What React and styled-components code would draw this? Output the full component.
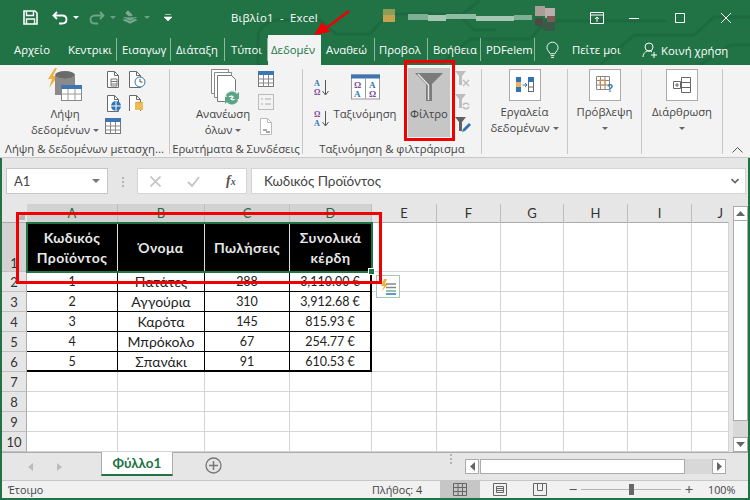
import React from "react";
import styled, { createGlobalStyle } from "styled-components";

const GREEN = "#217346";
const UI_FONT = `"Open Sans", "Noto Sans", sans-serif`;
const CELL_FONT = `Lato, "Noto Sans", sans-serif`;

const tabs = [
  { label: "Αρχείο", w: 64, pad: 14 },
  { label: "Κεντρικι", w: 53, pad: 4, sep: true },
  { label: "Εισαγωγ", w: 54, pad: 5, sep: true },
  { label: "Διάταξη", w: 54, pad: 5, sep: true },
  { label: "Τύποι", w: 43, pad: 6, sep: true },
  { label: "Δεδομέν", w: 53, pad: 3, active: true },
  { label: "Αναθεώ", w: 54, pad: 5, sep: true },
  { label: "Προβολ", w: 53, pad: 4, sep: true },
  { label: "Βοήθεια", w: 53, pad: 5, sep: true },
  { label: "PDFelem", w: 54, pad: 5, sep: true },
];

const columns = ["A", "B", "C", "D", "E", "F", "G", "H", "I", "J"];
const tableRows = [
  ["1", "Πατάτες", "288", "3,110.00 €"],
  ["2", "Αγγούρια", "310", "3,912.68 €"],
  ["3", "Καρότα", "145", "815.93 €"],
  ["4", "Μπρόκολο", "67", "254.77 €"],
  ["5", "Σπανάκι", "91", "610.53 €"],
];
const headers = [["Κωδικός", "Προϊόντος"], ["Όνομα"], ["Πωλήσεις"], ["Συνολικά", "κέρδη"]];

const Doc = ({ c = "#6a6a6a" }) => (
  <>
    <path d="M2.5 1.5h7l4 4v12h-11z" fill="#fff" stroke={c} />
    <path d="M9.5 1.5v4h4" fill="none" stroke={c} />
  </>
);

const TableSmall = ({ w = 16, h = 16, dim }) => (
  <svg width={w} height={h} viewBox="0 0 16 16">
    <rect x=".5" y=".5" width="15" height="15" fill="#fff" stroke={dim ? "#aaa" : "#777"} />
    <rect x="0" y="0" width="16" height="4" fill={dim ? "#9db8d4" : "#3f75b0"} />
    <path d="M.5 8h15M.5 12h15M5.5 4v12M10.5 4v12" stroke={dim ? "#bbb" : "#888"} />
  </svg>
);

const GetDataIcon = () => (
  <svg width="36" height="38" viewBox="0 0 36 38">
    <path d="M8 0 1 11h4l-3 9 9-12H6l4-8z" fill="#f0b03c" />
    <ellipse cx="18" cy="7" rx="10" ry="4" fill="#6b6b6b" />
    <path d="M8 7v20h20V7c-2 5-18 5-20 0z" fill="#8a8a8a" />
    <rect x="14.5" y="17.5" width="20" height="15" fill="#fff" stroke="#888" />
    <rect x="14" y="17" width="21" height="4" fill="#3f75b0" />
    <path d="M15 26h19M21 21v11M28 21v11" stroke="#999" />
  </svg>
);

const RefreshIcon = () => (
  <svg width="38" height="38" viewBox="-6 0 38 38">
    <path d="M1.5 1.5h17v24h-17z" fill="#fff" stroke="#888" />
    <path d="M4.5 4.5h17v25h-17z" fill="#fff" stroke="#888" />
    <path d="M7.5 7.5h14l4 4v22h-18z" fill="#fff" stroke="#777" />
    <circle cx="22" cy="30" r="8" fill="#f3f3f3" />
    <path d="M16 28c1-5 9-6 11-2l2-2v7h-7l2-2c-2-2-5-2-6 1zM28 32c-1 5-9 6-11 2l-2 2v-7h7l-2 2c2 2 5 2 6-1z" fill="#5aa585" />
  </svg>
);

const SortIcon = ({ reverse }) => (
  <svg width="16" height="18" viewBox="0 0 16 18">
    <text x="0" y="7" fontFamily="Liberation Serif" fontWeight="700" fontSize="8" fill={reverse ? "#7a4a9e" : "#2f75b5"}>
      {reverse ? "Ω" : "A"}
    </text>
    <text x="0" y="16" fontFamily="Liberation Serif" fontWeight="700" fontSize="8" fill={reverse ? "#2f75b5" : "#7a4a9e"}>
      {reverse ? "A" : "Ω"}
    </text>
    <path d="M11.5 1v14M8.500 12l3 4 3-4" fill="none" stroke="#555" />
  </svg>
);

const SortBigIcon = () => (
  <svg width="29" height="25" viewBox="0 0 29 25">
    <rect x=".5" y=".5" width="28" height="24" fill="#fff" stroke="#999" />
    <rect x="0" y="0" width="29" height="4" fill="#3f75b0" />
    <path d="M14.500 4v20" stroke="#999" />
    <g fontFamily="Liberation Serif" fontWeight="700" fontSize="9">
      <text x="3" y="13" fill="#7a4a9e">Ω</text>
      <text x="18" y="13" fill="#2f75b5">A</text>
      <text x="3" y="22" fill="#2f75b5">A</text>
      <text x="18" y="22" fill="#7a4a9e">Ω</text>
    </g>
  </svg>
);

const FunnelIcon = () => (
  <svg width="28" height="28" viewBox="0 0 28 28">
    <path d="M0 0h28L17 11v17h-6V11z" fill="#7b7b7b" />
    <path d="M3 1l10.500 11v15" fill="none" stroke="#e6e6e6" strokeWidth="1.4" />
  </svg>
);

const SmallFunnel = ({ fill = "#bdbdbd", children }) => (
  <svg width="16" height="16" viewBox="0 0 16 16">
    <path d="M0 0h11L7 5v9H4V5z" fill={fill} />
    {children}
  </svg>
);

const BoxedIcon = ({ kind }) => (
  <IconBox>
    <svg width="20" height="20" viewBox="0 0 20 20">
      {kind === "tools" && (
        <>
          <rect x="1" y="2" width="5" height="15" fill="#2f75b5" />
          <rect x="1" y="7" width="5" height="5" fill="#f0b060" />
          <rect x="13.500" y="2.500" width="5" height="14" fill="#fff" stroke="#666" />
          <rect x="13" y="2" width="6" height="5" fill="#2f75b5" />
          <path d="M13.500 12h5" stroke="#666" />
          <path d="M7.500 10h4M10 8l2 2-2 2" fill="none" stroke="#2f75b5" />
        </>
      )}
      {kind === "forecast" && (
        <>
          <path d="M1.500 1.500h13v13h-13zM1.500 5.500h13M1.500 10h13M5.500 1.500v13M10 1.500v13" fill="#fff" stroke="#888" />
          <rect x="5" y="5" width="5" height="5" fill="none" stroke="#e8903c" />
          <text x="12" y="17" fontFamily="Liberation Sans" fontWeight="700" fontSize="10" fill="#2f75b5">?</text>
        </>
      )}
      {kind === "outline" && (
        <>
          <path d="M9.500 2.500h9v15h-9zM9.500 7.500h9M9.500 12.500h9" fill="#fff" stroke="#666" />
          <path d="M1.500 6.500h7v7h-7zM3 10h4M5 8v4" fill="#fff" stroke="#666" />
        </>
      )}
    </svg>
  </IconBox>
);

const GridRow = ({ row }) => {
  const isHeader = row === 1;
  const isTableRow = row >= 2 && row <= 6;
  return (
    <>
      <RowHead $selected={isHeader}>{row}</RowHead>
      {columns.map((col, i) => {
        if (isHeader && i < 4) {
          return (
            <HeaderCell key={col}>
              {headers[i].map((line) => (
                <span key={line}>{line}</span>
              ))}
            </HeaderCell>
          );
        }
        if (isTableRow && i < 4) {
          return (
            <DataCell key={col} $lastRow={row === 6} $lastCol={i === 3} $isName={i === 1}>
              {tableRows[row - 2][i]}
            </DataCell>
          );
        }
        return <EmptyCell key={col} />;
      })}
    </>
  );
};

export default function App() {
  return (
    <>
      <GlobalStyle />
      <Window>
        <Chrome>
          <CircuitLines viewBox="0 0 750 65" preserveAspectRatio="none">
            <path
              d="M258 65V36c0-9 12-16 22-16h40l16 14h34l18-20h70l16 16 22 0M440 65l30-26h60l16-18h120M600 65l34-30h60l20-18h36M480 0l-20 16M700 65l30-20h20"
              fill="none"
              stroke="#1d6a40"
              strokeWidth="3"
            />
          </CircuitLines>
          <TitleBar>
            <Qat>
              <svg width="15" height="15" viewBox="0 0 15 15">
                <path d="M1 1h11l2 2v11H1z" fill="none" stroke="#fff" strokeWidth="1.6" />
                <path d="M3.500 1v4.500h7V1M3.500 14V9h8v5" fill="none" stroke="#fff" strokeWidth="1.4" />
              </svg>
              <QatGap $w={14} />
              <svg width="16" height="14" viewBox="0 0 16 14">
                <path d="M5 1 1.500 4.500 5 8M2 4.500h8c6 0 6 8 0 8H7" fill="none" stroke="#fff" strokeWidth="1.8" />
              </svg>
              <QatCaret />
              <QatGap $w={10} />
              <svg width="16" height="14" viewBox="0 0 16 14" opacity=".35">
                <path d="M11 1l3.500 3.500L11 8M14 4.500H6c-6 0-6 8 0 8h3" fill="none" stroke="#fff" strokeWidth="1.8" />
              </svg>
              <QatCaret $dim />
              <QatGap $w={5} />
              <svg width="18" height="18" viewBox="0 0 18 18" opacity=".4">
                <path d="M1 11l8 4 8-4-8-4zM1 8l8 4 8-4M7 1l5 5-3 3-5-5z" fill="#fff" stroke="#217346" strokeWidth=".6" />
              </svg>
              <QatCaret $dim />
              <QatGap $w={14} />
              <svg width="8" height="9" viewBox="0 0 8 9">
                <path d="M1 1.500h6M0 4h8L4 8z" fill="#fff" stroke="#fff" strokeWidth=".6" />
              </svg>
            </Qat>
            <DocTitle>Βιβλίο1&nbsp; -&nbsp; Excel</DocTitle>
            <Mosaic width="175" height="32" viewBox="0 0 175 32">
              <rect x="0" y="7" width="12" height="6" fill="#8f9c56" />
              <rect x="0" y="13" width="12" height="7" fill="#c4a24e" />
              <rect x="25" y="12" width="20" height="6" fill="#7fb096" />
              <rect x="45" y="13" width="18" height="6" fill="#a4c8b4" />
              <rect x="63" y="12" width="30" height="5" fill="#8dbca3" />
              <rect x="93" y="14" width="38" height="5" fill="#a4c8b4" />
              <rect x="131" y="13" width="18" height="5" fill="#7fb096" />
              <rect x="152" y="4" width="10" height="10" fill="#a99f96" />
              <rect x="162" y="6" width="10" height="10" fill="#bcaeac" />
              <rect x="152" y="16" width="8" height="8" fill="#4c4a44" />
              <rect x="160" y="20" width="12" height="9" fill="#3a5a48" />
              <rect x="164" y="14" width="8" height="6" fill="#7c5c52" />
            </Mosaic>
            <WindowControls>
              <svg width="14" height="12" viewBox="0 0 14 12">
                <path d="M.5 .5h13v11H.5zM.5 3h13M7 10V5M5 7l2-2 2 2" fill="none" stroke="#fff" />
              </svg>
              <WindowGap $w={25} />
              <svg width="10" height="10" viewBox="0 0 10 10">
                <path d="M0 5.500h10" stroke="#fff" />
              </svg>
              <WindowGap $w={36} />
              <svg width="10" height="10" viewBox="0 0 10 10">
                <path d="M.5 .5h9v9h-9z" fill="none" stroke="#fff" />
              </svg>
              <WindowGap $w={36} />
              <svg width="10" height="10" viewBox="0 0 10 10">
                <path d="M0 0l10 10M10 0 0 10" stroke="#fff" />
              </svg>
            </WindowControls>
          </TitleBar>
          <TabBar>
            {tabs.map((tab) => (
              <Tab key={tab.label} $w={tab.w} $pad={tab.pad} $active={tab.active} $sep={tab.sep}>
                {tab.label}
              </Tab>
            ))}
            <BulbSlot>
              <svg width="13" height="19" viewBox="0 0 14 19">
                <path d="M4.500 13C3 10 1 9 1 6.500a6 6 0 0 1 12 0C13 9 11 10 9.500 13zM5 15h4M5.500 17h3" fill="none" stroke="#fff" />
              </svg>
            </BulbSlot>
            <TabText $w={56}>Πείτε μοι</TabText>
            <ShareSlot>
              <svg width="16" height="16" viewBox="0 0 16 16">
                <circle cx="7" cy="5" r="4" fill="none" stroke="#fff" />
                <path d="M1 15c0-3 2-6 6-6 1 0 2 .2 3 .8M12 10v6M9 13h6" fill="none" stroke="#fff" />
              </svg>
              Κοινή χρήση
            </ShareSlot>
          </TabBar>
        </Chrome>

        <Ribbon>
          <Group $w={170}>
            <GroupBody>
              <BigButton $left={15} $w={100} $iconH={38}>
                <GetDataIcon />
                <BigLabel>Λήψη</BigLabel>
                <BigLabel>
                  δεδομένων <Caret />
                </BigLabel>
              </BigButton>
              <SmallGrid>
                <svg width="16" height="18" viewBox="0 0 16 18">
                  <Doc />
                  <path d="M6 9h6v7H6zM6 11.500h6M6 14h6" fill="#fff" stroke="#777" />
                </svg>
                <svg width="20" height="18" viewBox="0 0 20 18">
                  <Doc />
                  <circle cx="13" cy="12" r="5" fill="#fff" stroke="#2f75b5" />
                  <path d="M13 9v3h2.500" fill="none" stroke="#555" />
                </svg>
                <svg width="18" height="18" viewBox="0 0 18 18">
                  <Doc />
                  <circle cx="11" cy="12" r="5" fill="#2f75b5" />
                  <path d="M6 12h10M11 7v10" stroke="#fff" />
                </svg>
                <svg width="17" height="17" viewBox="0 0 17 17">
                  <Doc />
                  <ellipse cx="12" cy="9" rx="4" ry="1.500" fill="#d9a441" />
                  <rect x="8" y="9" width="8" height="7" fill="#eebb55" />
                </svg>
                <TableSmall />
              </SmallGrid>
            </GroupBody>
            <GroupLabel>Λήψη &amp; δεδομένων μετασχη...</GroupLabel>
          </Group>

          <Group $w={133}>
            <GroupBody>
              <BigButton $left={13} $w={80} $iconH={38}>
                <RefreshIcon />
                <BigLabel>Ανανέωση</BigLabel>
                <BigLabel>
                  όλων <Caret />
                </BigLabel>
              </BigButton>
              <SmallColumn $left={-5}>
                <TableSmall />
                <svg width="16" height="16" viewBox="0 0 16 16">
                  <rect x=".5" y=".5" width="15" height="15" fill="#f3f3f3" stroke="#bbb" />
                  <path d="M3 5h2M7 5h6M3 10h2M7 10h6" stroke="#aaa" />
                </svg>
                <svg width="16" height="18" viewBox="0 0 16 18">
                  <Doc c="#bbb" />
                  <path d="M5 13h4M8 15h4" stroke="#aaa" strokeWidth="2" />
                </svg>
              </SmallColumn>
            </GroupBody>
            <GroupLabel>Ερωτήματα &amp; Συνδέσεις</GroupLabel>
          </Group>

          <Group $w={179}>
            <GroupBody>
              <SortStack>
                <SortIcon />
                <SortIcon reverse />
              </SortStack>
              <BigButton $left={0} $w={70} $iconH={38}>
                <SortBigIcon />
                <BigLabel>Ταξινόμηση</BigLabel>
              </BigButton>
              <FilterButton>
                <FunnelIcon />
                <BigLabel>Φίλτρο</BigLabel>
              </FilterButton>
              <SmallColumn $left={5}>
                <SmallFunnel>
                  <path d="M8 9l6 6M14 9l-6 6" stroke="#bdbdbd" strokeWidth="1.500" />
                </SmallFunnel>
                <SmallFunnel>
                  <path d="M8 11a3.500 3.500 0 0 1 6 0M14 13a3.500 3.500 0 0 1-6 0" fill="none" stroke="#bdbdbd" strokeWidth="1.500" />
                </SmallFunnel>
                <SmallFunnel fill="#606060">
                  <path d="M7 15l1-3 6-6 2 2-6 6z" fill="#2f75b5" />
                </SmallFunnel>
              </SmallColumn>
            </GroupBody>
            <GroupLabel>Ταξινόμηση &amp; φιλτράρισμα</GroupLabel>
          </Group>

          <Group $w={86}>
            <GroupBody>
              <BigButton $left={0} $w={85}>
                <BoxedIcon kind="tools" />
                <BigLabel>Εργαλεία</BigLabel>
                <BigLabel>
                  δεδομένων <Caret />
                </BigLabel>
              </BigButton>
            </GroupBody>
          </Group>

          <Group $w={74}>
            <GroupBody>
              <BigButton $left={0} $w={73}>
                <BoxedIcon kind="forecast" />
                <BigLabel>Πρόβλεψη</BigLabel>
                <BigLabel>
                  <Caret />
                </BigLabel>
              </BigButton>
            </GroupBody>
          </Group>

          <Group $w={81}>
            <GroupBody>
              <BigButton $left={0} $w={80}>
                <BoxedIcon kind="outline" />
                <BigLabel>Διάρθρωση</BigLabel>
                <BigLabel>
                  <Caret />
                </BigLabel>
              </BigButton>
            </GroupBody>
          </Group>

          <Collapse>
            <svg width="11" height="6" viewBox="0 0 11 6">
              <path d="M.5 5.500l5-5 5 5" fill="none" stroke="#555" />
            </svg>
          </Collapse>
        </Ribbon>

        <Lower>
          <FormulaBar>
            <NameBox>
              A1
              <NameCaret />
            </NameBox>
            <Dots $h={11} />
            <FormulaButtons>
              <svg width="11" height="11" viewBox="0 0 11 11">
                <path d="M.5 .5l10 10M10.500 .5l-10 10" stroke="#c4c4c4" strokeWidth="1.600" />
              </svg>
              <svg width="13" height="11" viewBox="0 0 13 11">
                <path d="M1 6l4 4 7-9" fill="none" stroke="#c4c4c4" strokeWidth="1.800" />
              </svg>
              <Fx>f</Fx>
            </FormulaButtons>
            <FormulaInput>
              Κωδικός Προϊόντος
              <svg width="8" height="6" viewBox="0 0 8 6">
                <path d="M.5 1l3.500 3.500L7.500 1" fill="none" stroke="#666" strokeWidth="1.600" />
              </svg>
            </FormulaInput>
          </FormulaBar>

          <SheetArea>
            <Grid>
              <Corner>
                <svg width="9" height="9" viewBox="0 0 9 9">
                  <path d="M9 0v9H0z" fill="#b6b6b6" />
                </svg>
              </Corner>
              {columns.map((col, i) => (
                <ColHead key={col} $selected={i < 4} $right={col === "J"}>
                  {col}
                </ColHead>
              ))}
              {[1, 2, 3, 4, 5, 6, 7, 8, 9, 10].map((row) => (
                <GridRow key={row} row={row} />
              ))}
              <Selection>
                <Handle />
              </Selection>
              <PasteOptions>
                <svg width="17" height="16" viewBox="0 0 17 16">
                  <path d="M4 0 1 7h3L2 12l6-7H5l2-5z" fill="#f0b03c" />
                  <path d="M6 5h10M6 8.500h10" stroke="#888" strokeWidth="1.500" />
                  <path d="M6 12h10" stroke="#6bb090" strokeWidth="1.500" />
                  <path d="M6 15h10" stroke="#2f75b5" strokeWidth="1.500" />
                </svg>
              </PasteOptions>
            </Grid>
            <VScroll>
              <ScrollButton>
                <svg width="9" height="5" viewBox="0 0 9 5">
                  <path d="M4.500 0 9 5H0z" fill="#666" />
                </svg>
              </ScrollButton>
              <VThumb />
              <VTrack />
              <ScrollButton>
                <svg width="9" height="5" viewBox="0 0 9 5">
                  <path d="M4.500 5 9 0H0z" fill="#666" />
                </svg>
              </ScrollButton>
            </VScroll>
          </SheetArea>

          <SheetBar>
            <SheetNav>
              <svg width="5" height="8" viewBox="0 0 5 8">
                <path d="M5 0v8L0 4z" fill="#bbb" />
              </svg>
              <svg width="5" height="8" viewBox="0 0 5 8">
                <path d="M0 0v8l5-4z" fill="#bbb" />
              </svg>
            </SheetNav>
            <SheetTab>Φύλλο1</SheetTab>
            <AddSheet>
              <svg width="17" height="17" viewBox="0 0 17 17">
                <circle cx="8.500" cy="8.500" r="7.500" fill="none" stroke="#777" strokeWidth="1.300" />
                <path d="M4 8.500h9M8.500 4v9" stroke="#777" strokeWidth="1.500" />
              </svg>
            </AddSheet>
            <Dots $h={11} $left={228} />
            <HScroll>
              <HButton>
                <svg width="5" height="9" viewBox="0 0 5 9">
                  <path d="M5 0v9L0 4.500z" fill="#666" />
                </svg>
              </HButton>
              <HThumb />
              <HTrack />
              <HButton>
                <svg width="5" height="9" viewBox="0 0 5 9">
                  <path d="M0 0v9l5-4.500z" fill="#666" />
                </svg>
              </HButton>
            </HScroll>
          </SheetBar>

          <StatusBar>
            <Ready>Έτοιμο</Ready>
            <Count>Πλήθος: 4</Count>
            <ViewButton $active>
              <svg width="14" height="13" viewBox="0 0 14 13">
                <path d="M.5 .5h13v12H.5zM.5 4.500h13M.5 8.500h13M5 .5v12M9.500 .5v12" fill="none" stroke="#666" />
              </svg>
            </ViewButton>
            <ViewButton>
              <svg width="14" height="13" viewBox="0 0 14 13">
                <path d="M.5 .5h13v12H.5zM3.500 3.500h7v6h-7zM3.500 5.500h7M3.500 7.500h7" fill="none" stroke="#666" />
              </svg>
            </ViewButton>
            <ViewButton>
              <svg width="14" height="13" viewBox="0 0 14 13">
                <path d="M.5 .5h13v12H.5zM4.500 .5v7h5v-7" fill="none" stroke="#666" />
              </svg>
            </ViewButton>
            <ZoomControl>
              <ZoomSign>−</ZoomSign>
              <ZoomTrack>
                <ZoomThumb />
              </ZoomTrack>
              <ZoomSign>+</ZoomSign>
              <ZoomValue>100%</ZoomValue>
            </ZoomControl>
          </StatusBar>
        </Lower>

        <RedFrame $left={404} $top={60} $w={51} $h={81} />
        <RedFrame $left={16} $top={212} $w={366} $h={72} />
        <Arrow width="40" height="30" viewBox="0 0 40 30">
          <path d="M35 2 11 20" stroke="#f00000" strokeWidth="2.500" />
          <path d="M0 26 8 13l8 10z" fill="#f00000" />
        </Arrow>
      </Window>
    </>
  );
}

const GlobalStyle = createGlobalStyle`
  html, body {
    margin: 0;
    padding: 0;
    background: #fff;
  }
  svg {
    display: block;
    flex-shrink: 0;
  }
`;

const Window = styled.div`
  color: #444;
  display: flex;
  flex-direction: column;
  font-family: ${UI_FONT};
  font-size: 11.3px;
  height: 500px;
  overflow: hidden;
  position: relative;
  width: 750px;
`;

const Chrome = styled.div`
  background: ${GREEN};
  height: 65px;
  position: relative;
`;

const CircuitLines = styled.svg`
  height: 65px;
  left: 0;
  position: absolute;
  top: 0;
  width: 750px;
`;

const TitleBar = styled.div`
  align-items: center;
  display: flex;
  height: 35px;
  position: relative;
`;

const Qat = styled.div`
  align-items: center;
  box-sizing: border-box;
  display: flex;
  padding-left: 23px;
  width: 231px;
`;

const QatGap = styled.div`
  width: ${({ $w }) => $w}px;
`;

const QatCaret = styled.div`
  border-left: 3px solid transparent;
  border-right: 3px solid transparent;
  border-top: 3px solid ${({ $dim }) => ($dim ? "#6f9f86" : "#fff")};
  margin-left: 5px;
`;

const DocTitle = styled.div`
  color: #fff;
  letter-spacing: 0.2px;
  white-space: nowrap;
  width: 152px;
`;

const Mosaic = styled.svg`
  flex-shrink: 0;
`;

const WindowControls = styled.div`
  align-items: center;
  display: flex;
  margin-left: 32px;
`;

const WindowGap = styled.div`
  width: ${({ $w }) => $w}px;
`;

const TabBar = styled.div`
  align-items: stretch;
  display: flex;
  height: 30px;
  position: relative;
`;

const Tab = styled.div`
  background: ${({ $active }) => ($active ? "#f3f3f3" : "transparent")};
  box-sizing: border-box;
  color: ${({ $active }) => ($active ? GREEN : "#fff")};
  flex-shrink: 0;
  line-height: 30px;
  overflow: hidden;
  padding-left: ${({ $pad }) => $pad}px;
  position: relative;
  white-space: nowrap;
  width: ${({ $w }) => $w}px;

  &::after {
    background: ${({ $sep }) => ($sep ? "#8fb8a2" : "transparent")};
    bottom: 4px;
    content: "";
    position: absolute;
    right: 0;
    top: 3px;
    width: 1px;
  }
`;

const BulbSlot = styled.div`
  align-items: center;
  display: flex;
  margin-left: 11px;
  width: 26px;
`;

const TabText = styled.div`
  color: #fff;
  line-height: 30px;
  white-space: nowrap;
  width: ${({ $w }) => $w}px;
`;

const ShareSlot = styled.div`
  align-items: center;
  color: #fff;
  display: flex;
  gap: 3px;
  margin-left: 14px;
  white-space: nowrap;
`;

const Ribbon = styled.div`
  background: #f3f3f3;
  border-bottom: 1px solid #c8c8c8;
  display: flex;
  flex-shrink: 0;
  height: 92px;
  position: relative;
`;

const Group = styled.div`
  display: flex;
  flex-direction: column;
  flex-shrink: 0;
  position: relative;
  width: ${({ $w }) => $w}px;

  &::after {
    background: #c8c8c8;
    bottom: 3px;
    content: "";
    position: absolute;
    right: 0;
    top: 4px;
    width: 1px;
  }
`;

const GroupBody = styled.div`
  display: flex;
  flex: 1;
  min-height: 0;
  padding-top: 3px;
`;

const GroupLabel = styled.div`
  line-height: 16px;
  padding-right: 1px;
  text-align: center;
  white-space: nowrap;
`;

const BigButton = styled.div`
  align-items: center;
  display: flex;
  flex-direction: column;
  flex-shrink: 0;
  margin-left: ${({ $left }) => $left}px;
  width: ${({ $w }) => $w}px;

  & > svg {
    height: ${({ $iconH }) => $iconH}px;
  }
`;

const BigLabel = styled.div`
  align-items: center;
  display: flex;
  gap: 3px;
  height: 16px;
  line-height: 16px;
  white-space: nowrap;
`;

const Caret = styled.span`
  border-left: 3px solid transparent;
  border-right: 3px solid transparent;
  border-top: 3px solid #666;
  display: inline-block;
`;

const IconBox = styled.div`
  align-items: center;
  background: #fff;
  border: 1px solid #ababab;
  box-sizing: border-box;
  display: flex;
  height: 32px;
  justify-content: center;
  margin: 1px 0 3px;
  width: 32px;
`;

const SmallGrid = styled.div`
  align-content: start;
  display: grid;
  gap: 6px 4px;
  grid-template-columns: 18px 20px;
  margin-left: -10px;
  padding-top: 2px;
`;

const SmallColumn = styled.div`
  display: flex;
  flex-direction: column;
  gap: 7px;
  margin-left: ${({ $left }) => $left}px;
  padding-top: 3px;
`;

const SortStack = styled.div`
  display: flex;
  flex-direction: column;
  gap: 13px;
  margin-left: 11px;
  padding-top: 11px;
`;

const FilterButton = styled.div`
  align-items: center;
  background: #c6c6c6;
  box-sizing: border-box;
  display: flex;
  flex-direction: column;
  flex-shrink: 0;
  height: 69px;
  margin-left: 8px;
  padding-top: 5px;
  width: 42px;

  & > svg {
    margin-bottom: 5px;
  }
`;

const Collapse = styled.div`
  align-self: flex-end;
  margin-bottom: 4px;
  margin-left: 9px;
`;

const Lower = styled.div`
  border-bottom: 2px solid ${GREEN};
  border-left: 2px solid ${GREEN};
  border-right: 2px solid ${GREEN};
  display: flex;
  flex: 1;
  flex-direction: column;
  min-height: 0;
`;

const FormulaBar = styled.div`
  align-items: center;
  background: #e6e6e6;
  display: flex;
  flex-shrink: 0;
  height: 46px;
  padding: 0 2px 0 4px;
`;

const NameBox = styled.div`
  align-items: center;
  background: #fff;
  border: 1px solid #c6c6c6;
  box-sizing: border-box;
  display: flex;
  font-family: ${CELL_FONT};
  font-size: 13px;
  height: 26px;
  justify-content: space-between;
  padding: 0 7px;
  width: 102px;
`;

const NameCaret = styled.span`
  border-left: 4px solid transparent;
  border-right: 4px solid transparent;
  border-top: 4px solid #777;
`;

const Dots = styled.div`
  background-image: radial-gradient(circle, #b4b4b4 1px, transparent 1.2px);
  background-size: 2px 4px;
  height: ${({ $h }) => $h}px;
  margin-left: ${({ $left = 14 }) => $left}px;
  margin-right: 13px;
  width: 2px;
`;

const FormulaButtons = styled.div`
  align-items: center;
  background: #fff;
  border: 1px solid #d4d4d4;
  box-sizing: border-box;
  display: flex;
  gap: 26px;
  height: 26px;
  padding-left: 12px;
  width: 110px;
`;

const Fx = styled.span`
  color: #555;
  font-family: "Liberation Serif", serif;
  font-size: 14px;
  font-style: italic;
  font-weight: 700;

  &::after {
    content: "x";
    font-size: 10px;
  }
`;

const FormulaInput = styled.div`
  align-items: center;
  background: #fff;
  border: 1px solid #d4d4d4;
  box-sizing: border-box;
  display: flex;
  flex: 1;
  font-family: ${CELL_FONT};
  font-size: 13.5px;
  height: 26px;
  justify-content: space-between;
  margin-left: 4px;
  padding: 0 6px 0 12px;
`;

const SheetArea = styled.div`
  background: #e6e6e6;
  display: flex;
  flex-shrink: 0;
  height: 248px;
`;

const Grid = styled.div`
  background: #fff;
  display: grid;
  font-family: ${CELL_FONT};
  grid-template-columns: 25px 91px 87px 85px 82px 65px 64px 63px 64px 64px 37px;
  grid-template-rows: 19px 49px repeat(9, 20px);
  overflow: hidden;
  position: relative;
  width: 727px;
`;

const Corner = styled.div`
  align-items: flex-end;
  background: #e6e6e6;
  border-bottom: 1px solid #ababab;
  display: flex;
  justify-content: flex-end;
  padding: 0 2px 2px 0;
`;

const ColHead = styled.div`
  align-items: center;
  background: ${({ $selected }) => ($selected ? "#d2d2d2" : "#e6e6e6")};
  border-bottom: 1px solid #ababab;
  border-right: 1px solid ${({ $right }) => ($right ? "transparent" : "#bdbdbd")};
  box-sizing: border-box;
  color: ${({ $selected }) => ($selected ? "#1f6b42" : "#333")};
  display: flex;
  font-size: 13px;
  justify-content: ${({ $right }) => ($right ? "flex-end" : "center")};
  padding-right: ${({ $right }) => ($right ? "5px" : "0")};
`;

const RowHead = styled.div`
  align-items: ${({ $selected }) => ($selected ? "flex-end" : "center")};
  background: ${({ $selected }) => ($selected ? "#d2d2d2" : "#e6e6e6")};
  border-bottom: 1px solid #c0c0c0;
  border-right: 1px solid #ababab;
  box-sizing: border-box;
  color: #333;
  display: flex;
  font-size: 13px;
  justify-content: center;
`;

const EmptyCell = styled.div`
  border-bottom: 1px solid #d4d4d4;
  border-right: 1px solid #d4d4d4;
  box-sizing: border-box;
`;

const HeaderCell = styled.div`
  align-items: center;
  background: #000;
  border-right: 1px solid #ddd;
  box-sizing: border-box;
  color: #e8e8e8;
  display: flex;
  flex-direction: column;
  font-size: 14px;
  font-weight: 700;
  justify-content: center;
  letter-spacing: 0.4px;
  line-height: 20px;
`;

const DataCell = styled.div`
  align-items: center;
  border-bottom: ${({ $lastRow }) => ($lastRow ? "2px" : "1px")} solid #000;
  border-right: ${({ $lastCol }) => ($lastCol ? "2px" : "1px")} solid #000;
  box-sizing: border-box;
  color: #222;
  display: flex;
  font-size: ${({ $isName }) => ($isName ? "14px" : "12.5px")};
  justify-content: center;
`;

const Selection = styled.div`
  border: 2px solid ${GREEN};
  box-sizing: border-box;
  height: 51px;
  left: 24px;
  pointer-events: none;
  position: absolute;
  top: 18px;
  width: 347px;
`;

const Handle = styled.div`
  background: ${GREEN};
  border: 1px solid #fff;
  bottom: -4px;
  height: 5px;
  position: absolute;
  right: -4px;
  width: 5px;
`;

const PasteOptions = styled.div`
  align-items: center;
  background: #fff;
  border: 1px solid #a4c8b3;
  box-sizing: border-box;
  display: flex;
  height: 23px;
  justify-content: center;
  left: 374px;
  position: absolute;
  top: 71px;
  width: 24px;
`;

const VScroll = styled.div`
  display: flex;
  flex-direction: column;
  margin-left: 4px;
  padding-top: 2px;
  width: 15px;
`;

const ScrollButton = styled.div`
  align-items: center;
  background: #fff;
  border: 1px solid #ababab;
  box-sizing: border-box;
  display: flex;
  flex-shrink: 0;
  height: 15px;
  justify-content: center;
`;

const VThumb = styled.div`
  background: #fff;
  border: 1px solid #ababab;
  border-top: 0;
  box-sizing: border-box;
  flex: 1;
`;

const VTrack = styled.div`
  background: #d8d8d8;
  height: 16px;
`;

const SheetBar = styled.div`
  align-items: flex-start;
  background: #e6e6e6;
  border-bottom: 1px solid #c6c6c6;
  border-top: 1px solid #ababab;
  box-sizing: border-box;
  display: flex;
  flex-shrink: 0;
  height: 29px;
`;

const SheetNav = styled.div`
  align-items: center;
  box-sizing: border-box;
  display: flex;
  gap: 24px;
  height: 27px;
  padding-left: 26px;
  width: 99px;
`;

const SheetTab = styled.div`
  background: #fff;
  border-bottom: 2px solid ${GREEN};
  border-left: 1px solid #ababab;
  border-right: 1px solid #ababab;
  box-sizing: border-box;
  color: ${GREEN};
  flex-shrink: 0;
  font-family: ${CELL_FONT};
  font-size: 13.5px;
  font-weight: 700;
  height: 24px;
  line-height: 22px;
  margin-top: -1px;
  text-align: center;
  width: 72px;
`;

const AddSheet = styled.div`
  align-items: center;
  display: flex;
  height: 24px;
  margin-left: 32px;
`;

const HScroll = styled.div`
  display: flex;
  height: 15px;
  margin-top: 6px;
  width: 261px;
`;

const HButton = styled.div`
  align-items: center;
  background: #fff;
  border: 1px solid #ababab;
  box-sizing: border-box;
  display: flex;
  flex-shrink: 0;
  justify-content: center;
  width: 14px;
`;

const HThumb = styled.div`
  background: #fff;
  border: 1px solid #ababab;
  box-sizing: border-box;
  margin-left: 1px;
  width: 205px;
`;

const HTrack = styled.div`
  background: #d8d8d8;
  flex: 1;
`;

const StatusBar = styled.div`
  align-items: center;
  background: #f1f1f1;
  display: flex;
  flex: 1;
  font-size: 10.8px;
  min-height: 0;
`;

const Ready = styled.div`
  box-sizing: border-box;
  padding-left: 6px;
  width: 370px;
`;

const Count = styled.div`
  width: 68px;
`;

const ViewButton = styled.div`
  align-items: center;
  align-self: stretch;
  background: ${({ $active }) => ($active ? "#c6c6c6" : "transparent")};
  display: flex;
  justify-content: center;
  width: 40px;
`;

const ZoomControl = styled.div`
  align-items: center;
  display: flex;
  margin-left: 5px;
`;

const ZoomSign = styled.div`
  color: #555;
  font-size: 15px;
  line-height: 15px;
  text-align: center;
  width: 16px;
`;

const ZoomTrack = styled.div`
  background: #b4b4b4;
  height: 1px;
  position: relative;
  width: 100px;
`;

const ZoomThumb = styled.div`
  background: #666;
  height: 11px;
  left: 48px;
  position: absolute;
  top: -5px;
  width: 5px;
`;

const ZoomValue = styled.div`
  margin-left: 11px;
`;

const RedFrame = styled.div`
  border: 3px solid #f00000;
  box-sizing: border-box;
  height: ${({ $h }) => $h}px;
  left: ${({ $left }) => $left}px;
  pointer-events: none;
  position: absolute;
  top: ${({ $top }) => $top}px;
  width: ${({ $w }) => $w}px;
`;

const Arrow = styled.svg`
  left: 314px;
  pointer-events: none;
  position: absolute;
  top: 9px;
`;
